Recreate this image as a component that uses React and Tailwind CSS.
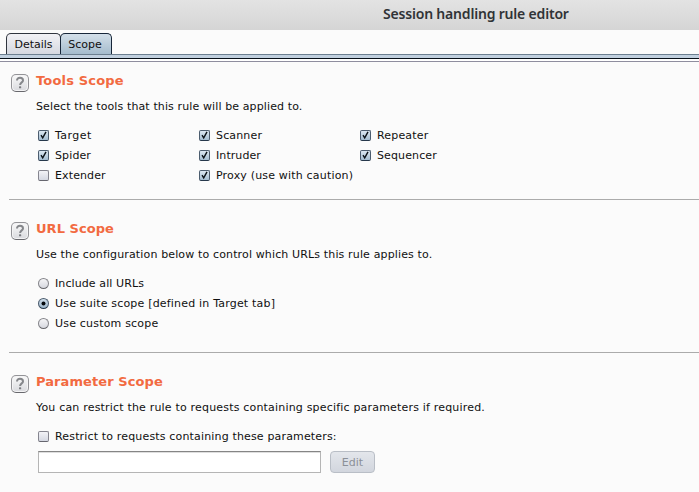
const tools = [
  { label: 'Target', checked: true, tracking: 'tracking-[0.45px]' },
  { label: 'Scanner', checked: true, tracking: 'tracking-[0.15px]' },
  { label: 'Repeater', checked: true, tracking: 'tracking-[0.17px]' },
  { label: 'Spider', checked: true, tracking: 'tracking-[0.12px]' },
  { label: 'Intruder', checked: true, tracking: 'tracking-[0.08px]' },
  { label: 'Sequencer', checked: true, tracking: 'tracking-[0.12px]' },
  { label: 'Extender', checked: false, tracking: 'tracking-[0.12px]' },
  { label: 'Proxy (use with caution)', checked: true, tracking: 'tracking-[0.18px]' },
]

const urlOptions = [
  { label: 'Include all URLs', selected: false, tracking: 'tracking-[0.1px]' },
  { label: 'Use suite scope [defined in Target tab]', selected: true, tracking: 'tracking-[0.19px]' },
  { label: 'Use custom scope', selected: false, tracking: 'tracking-[0.19px]' },
]

function HelpIcon() {
  return (
    <button
      type="button"
      aria-label="Help"
      className="mt-[2px] flex h-[18px] w-[18px] shrink-0 items-center justify-center rounded-[5px] border border-[#939397] border-b-[#68686d] bg-linear-to-b from-[#fafafa] to-[#d9dade] shadow-[inset_0_0_0_1px_#f4f4f5]"
    >
      <svg width="16" height="16" viewBox="0 0 16 16" fill="none">
        <path
          d="M5 5.6 C5 3.6 6.2 2.8 8 2.8 C9.9 2.8 11 3.8 11 5.4 C11 7.4 8.1 7.4 8.1 10"
          stroke="#85878b"
          strokeWidth="2"
        />
        <rect x="7" y="11.3" width="2.2" height="2" rx="0.6" fill="#7b7d82" />
      </svg>
    </button>
  )
}

function Checkbox({ label, checked, tracking }) {
  return (
    <label className="flex h-5 items-center whitespace-nowrap">
      <span
        className={[
          'mt-px mr-[6px] flex h-[11px] w-[11px] items-center justify-center rounded-[2px] border',
          checked
            ? 'border-[#4b5c6e] border-b-[#26384b] bg-linear-to-b from-[#dce8f2] to-[#a4bdd1]'
            : 'border-[#85858f] border-b-[#66666f] bg-linear-to-b from-[#f3f3f7] to-[#d5d8e2]',
        ].join(' ')}
      >
        {checked ? (
          <svg width="9" height="9" viewBox="0 0 9 9" fill="none" className="shrink-0">
            <path d="M2 4.2 L3.7 6.8 L7 0.8" stroke="#0b1218" strokeWidth="1.4" />
          </svg>
        ) : null}
      </span>
      <span className={['pt-[2px]', tracking].join(' ')}>{label}</span>
    </label>
  )
}

function Radio({ label, selected, tracking }) {
  return (
    <label className="flex h-5 items-center whitespace-nowrap">
      <span
        className={[
          'mt-px mr-[6px] flex h-[11px] w-[11px] items-center justify-center rounded-full border',
          selected
            ? 'border-[#4b5c6e] border-b-[#26384b] bg-linear-to-b from-[#d0deea] to-[#9db7cc]'
            : 'border-[#85858a] border-b-[#66666b] bg-linear-to-b from-[#f5f5f7] to-[#d7d8df]',
        ].join(' ')}
      >
        {selected ? <span className="h-[3px] w-[3px] rounded-full bg-[#05090d] ring-[0.5px] ring-[#05090d]" /> : null}
      </span>
      <span className={['pt-[2px]', tracking].join(' ')}>{label}</span>
    </label>
  )
}

function Section({ title, titleTracking, description, tracking, className, children }) {
  return (
    <section className={['flex', className].join(' ')}>
      <HelpIcon />
      <div className="ml-[7px]">
        <h2
          className={[
            'h-[18px] text-[13px] leading-[18px] font-bold whitespace-nowrap text-[#f26a41]',
            titleTracking,
          ].join(' ')}
        >
          {title}
        </h2>
        <p className={['mt-[9px] h-4 leading-4 whitespace-nowrap', tracking].join(' ')}>{description}</p>
        {children}
      </div>
    </section>
  )
}

export default function App() {
  return (
    <div className="h-[492px] w-[699px] overflow-hidden bg-[#fbfbfb] font-['DejaVu_Sans',sans-serif] text-[11px] text-[#101010]">
      <header className="flex h-[30px] bg-linear-to-b from-[#e3e3e3] to-[#d5d5d5] pl-[383px] font-['Noto_Sans',sans-serif] text-[14px] leading-[28px] font-semibold tracking-[-0.19px] whitespace-nowrap text-[#303336]">
        Session handling rule editor
      </header>

      <nav className="flex h-6 items-end pl-[6px]">
        <button
          type="button"
          className="h-[21px] w-[55px] rounded-t-[5px] border border-b-0 border-[#30353f] bg-linear-to-b from-[#f2f2f6] to-[#d5d8e0] pt-px leading-[19px]"
        >
          Details
        </button>
        <button
          type="button"
          className="-ml-px h-[21px] w-[52px] rounded-t-[5px] border border-b-0 border-[#172639] bg-linear-to-b from-[#d3dfe9] to-[#a5bccd] pt-px pr-[2px] leading-[19px]"
        >
          Scope
        </button>
      </nav>
      <div className="h-[5px] border-t border-b border-t-[#6c7f90] border-b-[#071019] bg-[#c1d0df]" />
      <div className="h-[3px] border-b border-[#8f8e9f] bg-white" />

      <main className="pl-[11px]">
        <Section
          title="Tools Scope"
          titleTracking="tracking-[0.18px]"
          description="Select the tools that this rule will be applied to."
          tracking="tracking-[0.115px]"
          className="h-[127px] pt-[10px]"
        >
          <div className="mt-[10px] ml-[2px] grid grid-cols-[161px_161px_120px]">
            {tools.map((tool) => (
              <Checkbox key={tool.label} {...tool} />
            ))}
          </div>
        </Section>

        <hr className="mt-[10px] -ml-[2px] border-t border-[#ababab]" />

        <Section
          title="URL Scope"
          titleTracking="tracking-[0.05px]"
          description="Use the configuration below to control which URLs this rule applies to."
          tracking="tracking-[0.14px]"
          className="h-[152px] pt-[20px]"
        >
          <div className="mt-[10px] ml-[2px]">
            {urlOptions.map((option) => (
              <Radio key={option.label} {...option} />
            ))}
          </div>
        </Section>

        <hr className="-ml-[2px] border-t border-[#ababab]" />

        <Section
          title="Parameter Scope"
          titleTracking="tracking-[0.08px]"
          description="You can restrict the rule to requests containing specific parameters if required."
          tracking="tracking-[0.187px]"
          className="pt-[20px]"
        >
          <div className="mt-[10px] ml-[2px]">
            <Checkbox
              label="Restrict to requests containing these parameters:"
              checked={false}
              tracking="tracking-[0.16px]"
            />
            <div className="mt-[5px] flex">
              <input
                type="text"
                className="h-[22px] w-[283px] border border-[#b5b5b5] border-t-[#858585] bg-white shadow-[inset_0_1px_0_#dedede] outline-none"
              />
              <button
                type="button"
                disabled
                className="ml-[9px] h-[22px] w-[45px] rounded-[4px] border border-[#b9bec6] bg-linear-to-b from-[#e3e6eb] to-[#d2d6de] pt-px leading-[20px] text-[#8b9098]"
              >
                Edit
              </button>
            </div>
          </div>
        </Section>
      </main>
    </div>
  )
}
